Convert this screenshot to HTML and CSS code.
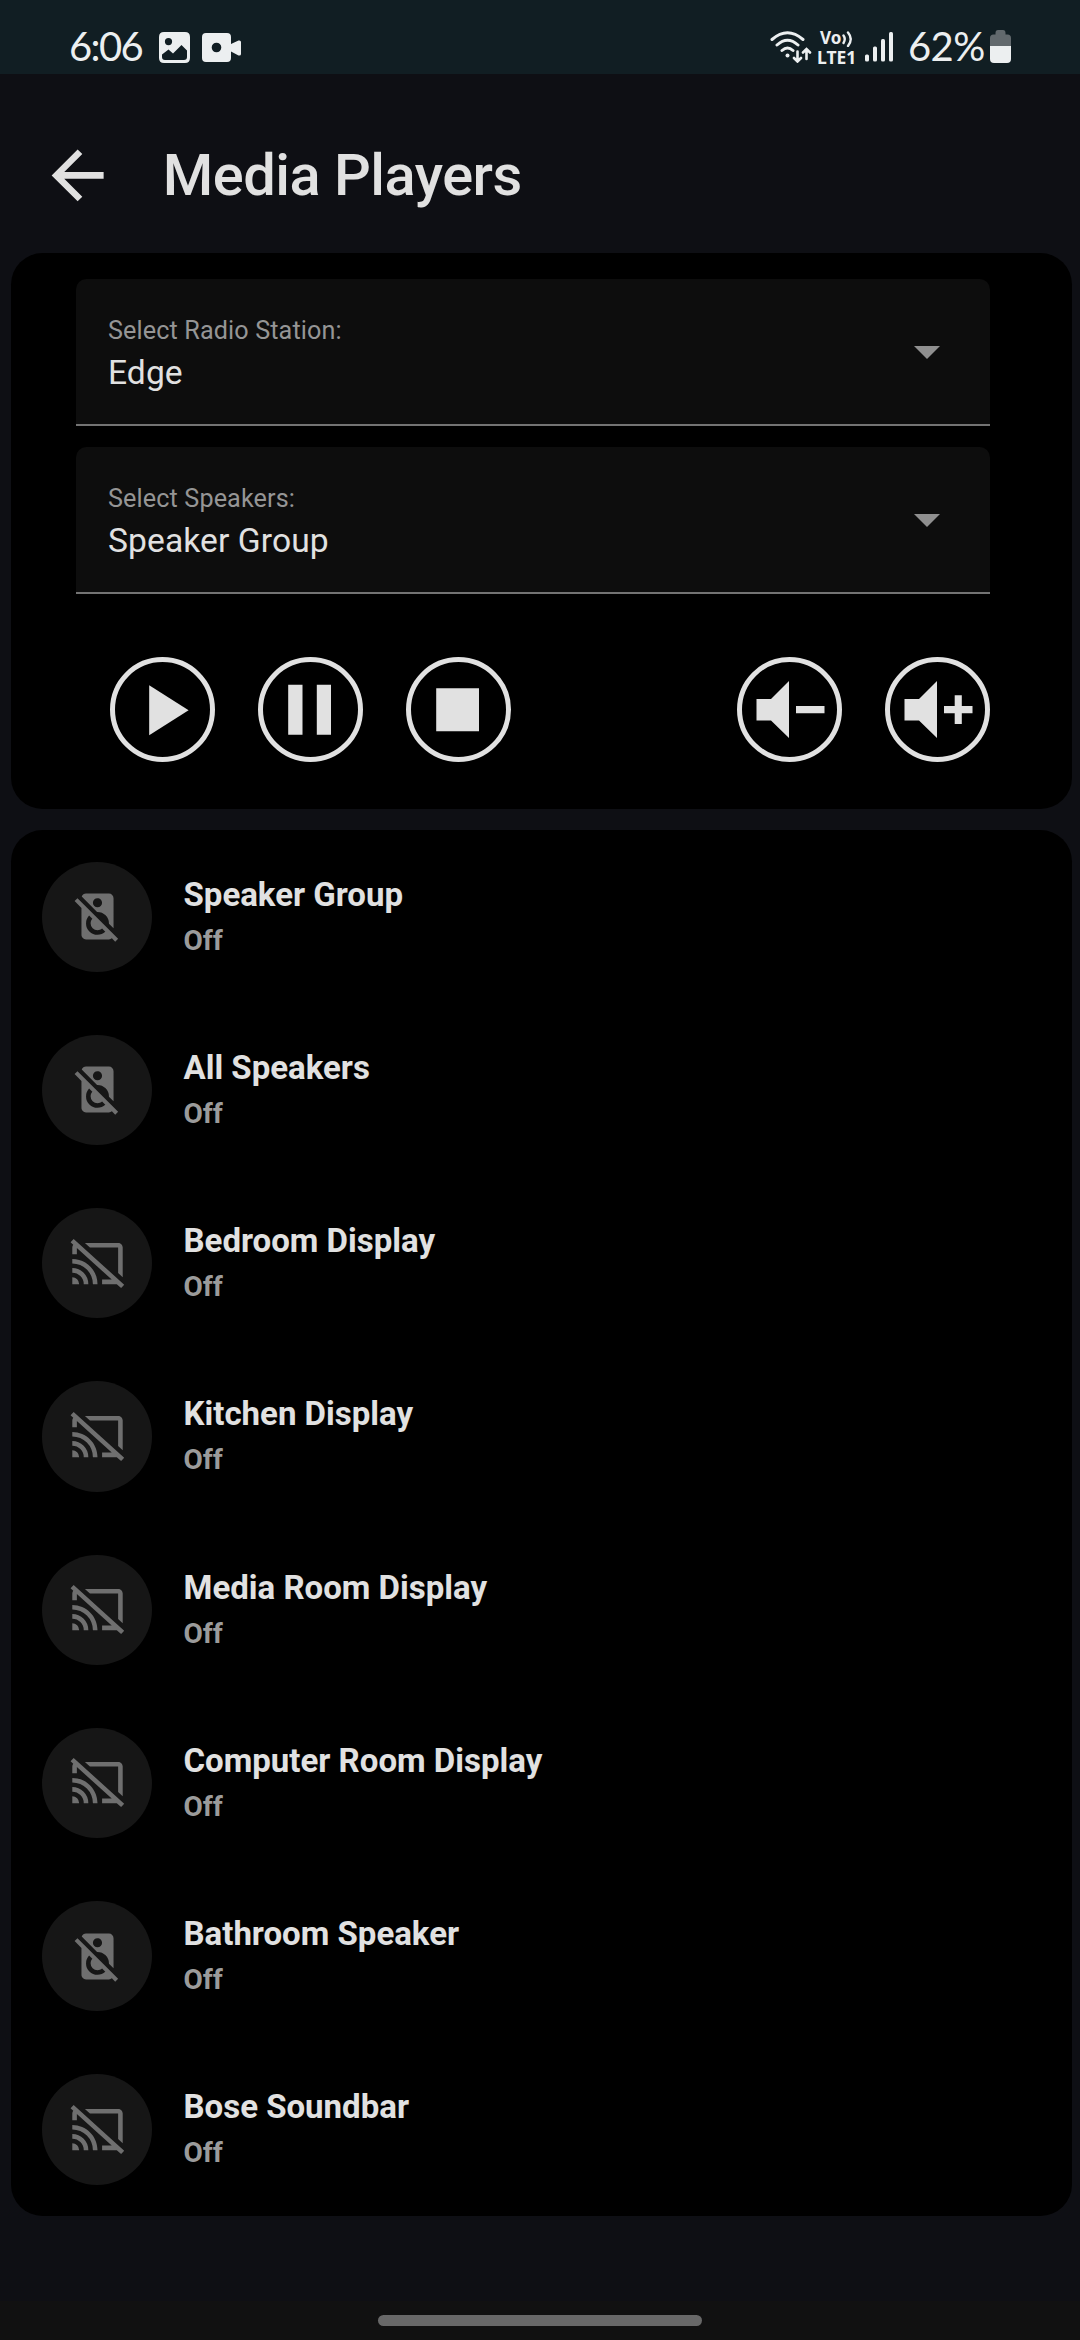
FILE: index.html
```
<!DOCTYPE html>
<html lang="en">
<head>
<meta charset="utf-8">
<title>Media Players</title>
<link rel="stylesheet" href="styles.css">
</head>
<body>
<svg class="sprite" aria-hidden="true">
  <symbol id="speaker-off" viewBox="0 0 24 24"><path d="M2,5.27L3.28,4L21,21.72L19.73,23L18.27,21.54C17.93,21.83 17.5,22 17,22H7C5.89,22 5,21.1 5,20V8.27L2,5.27M12,18A3,3 0 0,1 9,15C9,14.24 9.28,13.54 9.75,13L8.33,11.6C7.5,12.5 7,13.69 7,15A5,5 0 0,0 12,20C13.31,20 14.5,19.5 15.4,18.67L14,17.25C13.45,17.72 12.76,18 12,18M17,15A5,5 0 0,0 12,10H11.82L5.12,3.3C5.41,2.54 6.14,2 7,2H17A2,2 0 0,1 19,4V17.18L17,15.17V15M12,4C10.89,4 10,4.89 10,6A2,2 0 0,0 12,8A2,2 0 0,0 14,6C14,4.89 13.1,4 12,4Z"/></symbol>
  <symbol id="cast-off" viewBox="0 0 24 24"><path d="M1.6,1.27L0.25,2.75L1.41,3.8C1.16,4.13 1,4.55 1,5V8H3V5.23L18.2,19H14V21H20.41L22.31,22.72L23.65,21.24M6.5,3L8.7,5H21V16.14L23,17.95V5C23,3.89 22.1,3 21,3M1,10V12A9,9 0 0,1 10,21H12C12,14.92 7.08,10 1,10M1,14V16A5,5 0 0,1 6,21H8A7,7 0 0,0 1,14M1,18V21H4A3,3 0 0,0 1,18Z"/></symbol>
</svg>

<div class="status">
  <span class="time">6:06</span>
  <svg class="st-image" viewBox="0 0 31 31" width="31" height="31"><path fill-rule="evenodd" d="M5 0H26Q31 0 31 5V26Q31 31 26 31H5Q0 31 0 26V5Q0 0 5 0ZM9.5 6A3.6 3.6 0 1 0 9.5 13.200A3.600 3.600 0 1 0 9.500 6ZM3 22.500L9.500 17.500L14 21.500L22.500 13L28 18.500V25Q28 28 25 28H6Q3 28 3 25Z"/></svg>
  <svg class="st-video" viewBox="0 0 39 29" width="39" height="29"><path fill-rule="evenodd" d="M4 0H25Q29 0 29 4V11L36.500 7.500Q39 7 39 9V21Q39 23 36.500 22.500L29 18.500V25Q29 29 25 29H4Q0 29 0 25V4Q0 0 4 0ZM14.500 9.700A4.800 4.800 0 1 0 14.500 19.300A4.800 4.800 0 1 0 14.500 9.700Z"/></svg>
  <div class="status-right">
    <svg class="st-wifi" viewBox="0 0 42 32" width="42" height="32"><g fill="none" stroke="#eceff0" stroke-width="3" stroke-linecap="round"><path d="M2 8.500Q17.500-5 33 8.500M7 14Q17.500 4.500 28 14M12 19.500Q17.500 14.500 23 19.500"/><path stroke-width="2.600" d="M27.500 20.500V30M24 27L27.500 30.500L31 27M36.500 28V19M33 21.500L36.500 18L40 21.500"/></g><circle cx="17.500" cy="24.500" r="2"/></svg>
    <div class="lte"><div class="lte-top"><span>Vo</span><svg viewBox="0 0 11 16" width="11" height="16"><path fill="none" stroke="#eceff0" stroke-width="2.400" stroke-linecap="round" d="M1.500 4.500Q4 8 1.500 12M6 1.500Q11.500 8 6 15"/></svg></div><span class="lte-bottom">LTE1</span></div>
    <svg class="st-bars" viewBox="0 0 28 30" width="28" height="30"><rect x="0" y="22.500" width="4" height="7" rx="1.500"/><rect x="8" y="14.500" width="4" height="15" rx="1.500"/><rect x="16" y="7" width="4" height="22.500" rx="1.500"/><rect x="24" y="0" width="4" height="29.500" rx="1.500"/></svg>
    <span class="pct">62%</span>
    <svg class="st-batt" viewBox="0 0 21 33" width="21" height="33"><path fill="#62696d" d="M0 16V8Q0 4.500 3.500 4.500H5.500V3Q5.500 0 8 0H13Q15.500 0 15.500 3V4.500H17.500Q21 4.500 21 8V16Z"/><path d="M0 16H21V29Q21 33 17 33H4Q0 33 0 29Z"/></svg>
  </div>
</div>

<header class="header">
  <svg class="back" viewBox="0 0 24 24"><path d="M20,11V13H8L13.500,18.500L12.080,19.920L4.160,12L12.080,4.080L13.500,5.500L8,11H20Z"/></svg>
  <h1>Media Players</h1>
</header>

<main>
  <section class="card controls">
    <div class="select">
      <div><div class="label">Select Radio Station:</div><div class="value">Edge</div></div>
      <svg class="caret" viewBox="0 0 26 13"><path d="M0 0H26L13 13Z"/></svg>
    </div>
    <div class="select">
      <div><div class="label">Select Speakers:</div><div class="value">Speaker Group</div></div>
      <svg class="caret" viewBox="0 0 26 13"><path d="M0 0H26L13 13Z"/></svg>
    </div>
    <div class="buttons">
      <button><svg viewBox="0 0 105 105"><path d="M39.200 28.200V78.200L78.600 53.200Z"/></svg></button>
      <button><svg viewBox="0 0 105 105"><path d="M30.200 27.700H44.500V77.700H30.200ZM58.800 27.700H73V77.700H58.800Z"/></svg></button>
      <button><svg viewBox="0 0 105 105"><path d="M30.200 31.300H73V74.200H30.200Z"/></svg></button>
      <button class="push"><svg viewBox="0 0 105 105"><path d="M19.500 42H34L52 24V81L34 63.500H19.500ZM59 49.100H87.500V56.200H59Z"/></svg></button>
      <button><svg viewBox="0 0 105 105"><path d="M19.500 42H34L52 24V81L34 63.500H19.500ZM59 49.100H69.700V38.300H76.800V49.100H87.500V56.200H76.800V67H69.700V56.200H59Z"/></svg></button>
    </div>
  </section>

  <section class="card list">
    <div class="row"><span class="disc"><svg><use href="#speaker-off"/></svg></span><div class="info"><div class="name">Speaker Group</div><div class="state">Off</div></div></div>
    <div class="row"><span class="disc"><svg><use href="#speaker-off"/></svg></span><div class="info"><div class="name">All Speakers</div><div class="state">Off</div></div></div>
    <div class="row"><span class="disc"><svg><use href="#cast-off"/></svg></span><div class="info"><div class="name">Bedroom Display</div><div class="state">Off</div></div></div>
    <div class="row"><span class="disc"><svg><use href="#cast-off"/></svg></span><div class="info"><div class="name">Kitchen Display</div><div class="state">Off</div></div></div>
    <div class="row"><span class="disc"><svg><use href="#cast-off"/></svg></span><div class="info"><div class="name">Media Room Display</div><div class="state">Off</div></div></div>
    <div class="row"><span class="disc"><svg><use href="#cast-off"/></svg></span><div class="info"><div class="name">Computer Room Display</div><div class="state">Off</div></div></div>
    <div class="row"><span class="disc"><svg><use href="#speaker-off"/></svg></span><div class="info"><div class="name">Bathroom Speaker</div><div class="state">Off</div></div></div>
    <div class="row"><span class="disc"><svg><use href="#cast-off"/></svg></span><div class="info"><div class="name">Bose Soundbar</div><div class="state">Off</div></div></div>
  </section>
</main>

<footer class="nav"><span class="pill"></span></footer>
</body>
</html>
```
FILE: styles.css
```
* { box-sizing: border-box; }
html, body { margin: 0; height: 2340px; }
body {
  width: 1080px;
  display: flex;
  flex-direction: column;
  overflow: hidden;
  background: #0e0f14;
  color: #e1e1e1;
  font-family: Roboto, sans-serif;
}
svg { display: block; flex: none; }
.sprite { display: none; }

.status {
  height: 74px;
  flex: none;
  display: flex;
  align-items: flex-start;
  padding-left: 69px;
  background: #111e23;
  color: #eceff0;
  fill: #eceff0;
  font-family: Lato, sans-serif;
  white-space: nowrap;
}
.time, .pct { font-size: 40px; line-height: 48px; margin-top: 22px; }
.time { width: 90px; letter-spacing: -1.6px; }
.st-image { margin-top: 32px; }
.st-video { margin: 33px 0 0 12px; }
.status-right { display: flex; margin-left: auto; padding-right: 69px; align-items: flex-start; }
.st-wifi { margin-top: 31px; }
.lte { width: 40px; margin: 29px 0 0 5px; font-family: "Noto Sans", sans-serif; font-weight: 700; }
.lte-top { display: flex; padding-left: 3px; height: 18px; font-size: 17px; line-height: 18px; gap: 1px; }
.lte-top svg { margin-top: 2px; }
.lte-bottom { display: block; font-size: 17.5px; line-height: 18px; height: 18px; margin-top: 1px; }
.st-bars { margin: 32px 0 0 8px; }
.pct { width: 82px; margin-left: 15px; letter-spacing: -.6px; }
.st-batt { margin-top: 30px; }

.header {
  height: 179px;
  flex: none;
  display: flex;
  align-items: center;
  padding: 24px 0 0 38px;
}
.back { width: 78.75px; height: 78.75px; fill: #e1e1e1; }
h1 { margin: -2px 0 0 46px; font-size: 57.75px; font-weight: 500; line-height: 70px; letter-spacing: -.5px; }

main { flex: 1; padding: 0 8px 0 11px; display: flex; flex-direction: column; gap: 21px; }
.card { background: #000; border-radius: 31.5px; flex: none; }
.controls { height: 556px; padding: 26px 82px 0 65px; display: flex; flex-direction: column; gap: 21px; }
.select {
  height: 147px;
  display: flex;
  justify-content: space-between;
  padding: 31px 50px 0 32px;
  background: #0d0d0d;
  border-bottom: 2px solid #737373;
  border-radius: 10.5px 10.5px 0 0;
}
.label { font-size: 25.2px; line-height: 42px; color: #959595; letter-spacing: .12px; }
.value { font-size: 33.6px; line-height: 42px; letter-spacing: .1px; }
.caret { width: 26px; height: 13px; margin-top: 36px; fill: #8f8f8f; }
.buttons { display: flex; gap: 43px; padding: 42px 0 0 34px; }
button {
  width: 105px;
  height: 105px;
  padding: 0;
  border: 5px solid #e1e1e1;
  border-radius: 50%;
  background: none;
  fill: #e1e1e1;
}
button svg { width: 105px; height: 105px; margin: -5px; }
.push { margin-left: auto; }

.list { height: 1386px; padding: 31.5px 31px; display: flex; flex-direction: column; gap: 63px; }
.row { height: 110.25px; display: flex; align-items: center; gap: 31.5px; }
.disc {
  width: 110px;
  height: 110.25px;
  border-radius: 50%;
  background: #161616;
  display: flex;
  align-items: center;
  justify-content: center;
}
.disc svg { width: 55px; height: 55px; fill: #6f6f6f; }
.info { padding-top: 2px; }
.name { font-size: 33px; line-height: 46px; font-weight: 700; }
.state { font-size: 28px; line-height: 46px; font-weight: 700; color: #9b9b9b; }

.nav { height: 39px; flex: none; background: #111; display: flex; justify-content: center; padding-top: 14px; }
.pill { width: 324px; height: 11px; border-radius: 5.5px; background: #686868; }
```
